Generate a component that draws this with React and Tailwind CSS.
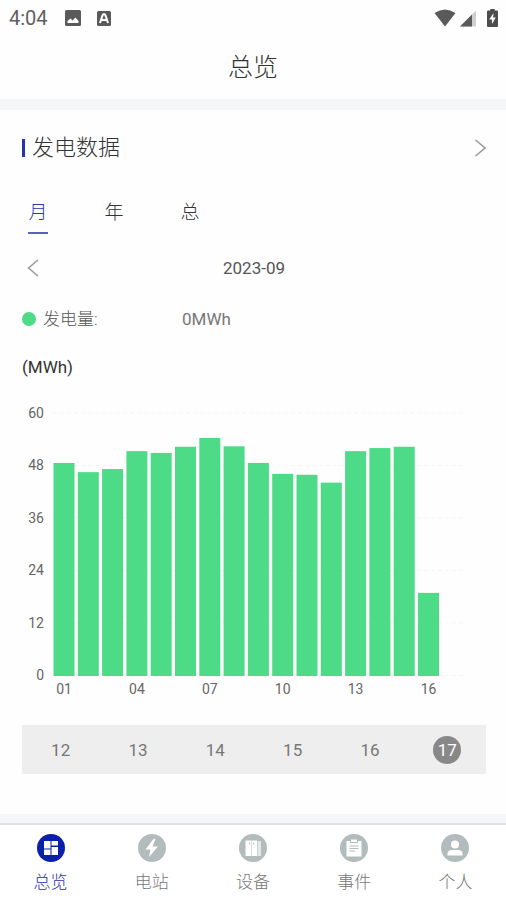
import React, { useState } from "react";

const TABS = ["月", "年", "总"];
const DAYS = [12, 13, 14, 15, 16, 17];
const OUTPUT = [48.7, 46.6, 47.3, 51.4, 51, 52.4, 54.4, 52.5, 48.7, 46.2, 46, 44.2, 51.4, 52.1, 52.4, 19];
const TICKS = [60, 48, 36, 24, 12, 0];

const CHART = { left: 31, base: 275, unit: 4.375, step: 24.3, bar: 21 };

function StatusBar() {
  return (
    <div className="flex h-9 items-center justify-between pl-[9px] pr-2 text-[#5f5f5f]">
      <div className="flex items-center">
        <span className="w-14 text-[20px] leading-6">4:04</span>
        <svg className="h-4 w-4" viewBox="0 0 16 16" aria-hidden="true">
          <rect width="16" height="16" rx="1.5" fill="#5a5a5a" />
          <path d="M2.5 13V11L5.5 8.5 7.5 10.5 10.5 7.5 13.5 11V13Z" fill="#fff" />
        </svg>
        <svg className="ml-[15px] h-4 w-4" viewBox="0 0 16 16" aria-hidden="true">
          <rect x="1" y="1" width="14" height="15" rx="1.5" fill="#5a5a5a" />
          <path
            d="M4 13 6.5 5.5Q8 2.5 9.5 5.5L12 13M6 10H10"
            fill="none"
            stroke="#fff"
            strokeWidth="2"
          />
        </svg>
      </div>
      <div className="flex items-center">
        <svg className="h-[18px] w-[22px]" viewBox="0 0 22 18" aria-hidden="true">
          <path d="M.5 4Q11-3 21.5 4L11 17.5Z" fill="#5a5a5a" />
        </svg>
        <svg className="ml-1 h-[18px] w-4" viewBox="0 0 16 18" aria-hidden="true">
          <path d="M0 17.5 16 1.5V17.5Z" fill="#cfcfcf" />
          <path d="M0 17.5 12 5.5V17.5Z" fill="#5a5a5a" />
        </svg>
        <svg className="ml-[11px] h-[18px] w-[11px]" viewBox="0 0 10 18" preserveAspectRatio="none" aria-hidden="true">
          <path d="M3 0H7V1.5H9Q10 1.5 10 2.5V17Q10 18 9 18H1Q0 18 0 17V2.5Q0 1.5 1 1.5H3Z" fill="#4d4d4d" />
          <path d="M6 4 2 10.5H4.5V15L8 8.5H5.5Z" fill="#fff" />
        </svg>
      </div>
    </div>
  );
}

function Chevron({ direction }) {
  return (
    <svg className="h-[18px] w-3" viewBox="0 0 12 18" fill="none" stroke="#999" strokeWidth="1.5" aria-hidden="true">
      <path d={direction === "left" ? "M11 1 1.5 9 11 17" : "M1.5 1 11 9 1.5 17"} />
    </svg>
  );
}

function OutputChart() {
  const { left, base, unit, step, bar } = CHART;
  return (
    <svg className="block w-full" viewBox="0 0 464 300" role="img" aria-label="发电量 (MWh)">
      {TICKS.map((tick) => (
        <g key={tick}>
          <line
            x1={left}
            x2="442"
            y1={base + 0.5 - tick * unit}
            y2={base + 0.5 - tick * unit}
            stroke="#f6f6f6"
            strokeDasharray="4 3"
          />
          <text x="22" y={base + 5 - tick * unit} textAnchor="end" className="fill-[#666] text-[14px]">
            {tick}
          </text>
        </g>
      ))}
      {OUTPUT.map((value, i) => (
        <g key={i}>
          <rect
            x={left + 0.5 + i * step}
            y={base + 1 - value * unit}
            width={bar}
            height={value * unit}
            fill="#4ddb88"
          />
          {i % 3 === 0 && (
            <text x={left + 11 + i * step} y="294" textAnchor="middle" className="fill-[#666] text-[14px]">
              {String(i + 1).padStart(2, "0")}
            </text>
          )}
        </g>
      ))}
    </svg>
  );
}

const NAV = [
  {
    label: "总览",
    icon: <path d="M7 7H13.5V14.5H7ZM7 15.5H13.5V21H7ZM14.5 7H21V11.5H14.5ZM14.5 13H21V21H14.5Z" fill="#fff" />,
  },
  {
    label: "电站",
    icon: <path d="M15.5 5 7.5 15.5H12.5L11 23 20 12.5H14.5L17.5 5Z" fill="#fff" />,
  },
  {
    label: "设备",
    icon: (
      <>
        <path d="M6.5 6.5H12V22H6.5ZM12.5 6.5H18V22H12.5Z" fill="#fff" />
        <path d="M18.5 7H22V22H18.5Z" fill="#e3e7e8" />
        <path d="M10.5 8.5V10.5M14.5 8.5V10.5" stroke="#b3bcbd" />
      </>
    ),
  },
  {
    label: "事件",
    icon: (
      <>
        <path d="M6.5 7H10V9H18V7H21.5V22.5H6.5Z" fill="#fff" />
        <path d="M11 5.5H17V8H11Z" fill="#fff" />
        <path d="M9.5 12H18.5M9.5 14.5H18.5M9.5 17H15" stroke="#b3bcbd" />
      </>
    ),
  },
  {
    label: "个人",
    icon: (
      <>
        <circle cx="14" cy="10.5" r="4" fill="#fff" />
        <path d="M6.5 21.5V19Q7 16 11 16H17Q21 16 21.5 19V21.5Z" fill="#fff" />
      </>
    ),
  },
];

export default function App() {
  const [tab, setTab] = useState("月");
  const [day, setDay] = useState(17);
  const [page, setPage] = useState("总览");

  return (
    <div className="flex min-h-screen flex-col bg-[#fefefe] font-[Roboto,'Noto_Sans_CJK_SC',sans-serif] text-[#333]">
      <StatusBar />
      <header className="flex h-[63px] items-center justify-center">
        <h1 className="text-[25px] leading-8 font-light">总览</h1>
      </header>
      <div className="h-[11px] bg-[#f5f6f7]" />

      <main className="flex-1 pr-5 pl-[22px]">
        <div className="flex h-[75px] items-center justify-between">
          <h2 className="flex items-center gap-[7px] text-[22px] leading-8 font-light">
            <span className="h-[18px] w-[3px] bg-[#2433ae]" />
            发电数据
          </h2>
          <button type="button" aria-label="详情">
            <Chevron direction="right" />
          </button>
        </div>

        <div className="flex gap-14 px-[6px] pt-[14px]">
          {TABS.map((name) => (
            <button
              key={name}
              type="button"
              onClick={() => setTab(name)}
              className={`h-[35px] w-5 border-b-2 pb-[5px] text-[19px] leading-7 font-light ${
                tab === name ? "border-[#5a62bd] text-[#2b36b0]" : "border-transparent"
              }`}
            >
              {name}
            </button>
          ))}
        </div>

        <div className="grid h-[68px] grid-cols-3 items-center px-[5px]">
          <button type="button" aria-label="上个月" className="justify-self-start">
            <Chevron direction="left" />
          </button>
          <span className="text-center text-[17px] leading-6 text-[#555]">2023-09</span>
        </div>

        <div className="flex h-[34px] items-center text-[17px] leading-6 text-[#777]">
          <span className="h-[14px] w-[14px] rounded-full bg-[#4ddb88]" />
          <span className="ml-[7px] w-[139px] font-light text-[#555]">发电量:</span>
          <span>0MWh</span>
        </div>

        <div className="pt-[19px] pb-[21px] text-[17px] leading-6">(MWh)</div>

        <OutputChart />

        <div className="mt-[25px] grid h-[49px] grid-cols-6 items-center justify-items-center bg-[#eee]">
          {DAYS.map((d) => (
            <button
              key={d}
              type="button"
              onClick={() => setDay(d)}
              className={`h-7 w-7 rounded-full text-[17px] leading-7 ${
                day === d ? "bg-[#888] text-white" : "text-[#777]"
              }`}
            >
              {d}
            </button>
          ))}
        </div>
      </main>

      <div className="h-[9px] bg-[#f5f6f7]" />
      <nav className="grid h-[77px] grid-cols-5 border-t-2 border-[#dfe1e2] bg-white">
        {NAV.map(({ label, icon }) => (
          <button
            key={label}
            type="button"
            onClick={() => setPage(label)}
            className={`flex flex-col items-center gap-2 pt-[9px] text-[17px] leading-6 font-light ${
              page === label ? "text-[#1c2bb0]" : "text-[#777]"
            }`}
          >
            <svg className="h-7 w-7" viewBox="0 0 28 28" aria-hidden="true">
              <circle cx="14" cy="14" r="14" fill={page === label ? "#0b1fa8" : "#b3bcbd"} />
              {icon}
            </svg>
            {label}
          </button>
        ))}
      </nav>
    </div>
  );
}
